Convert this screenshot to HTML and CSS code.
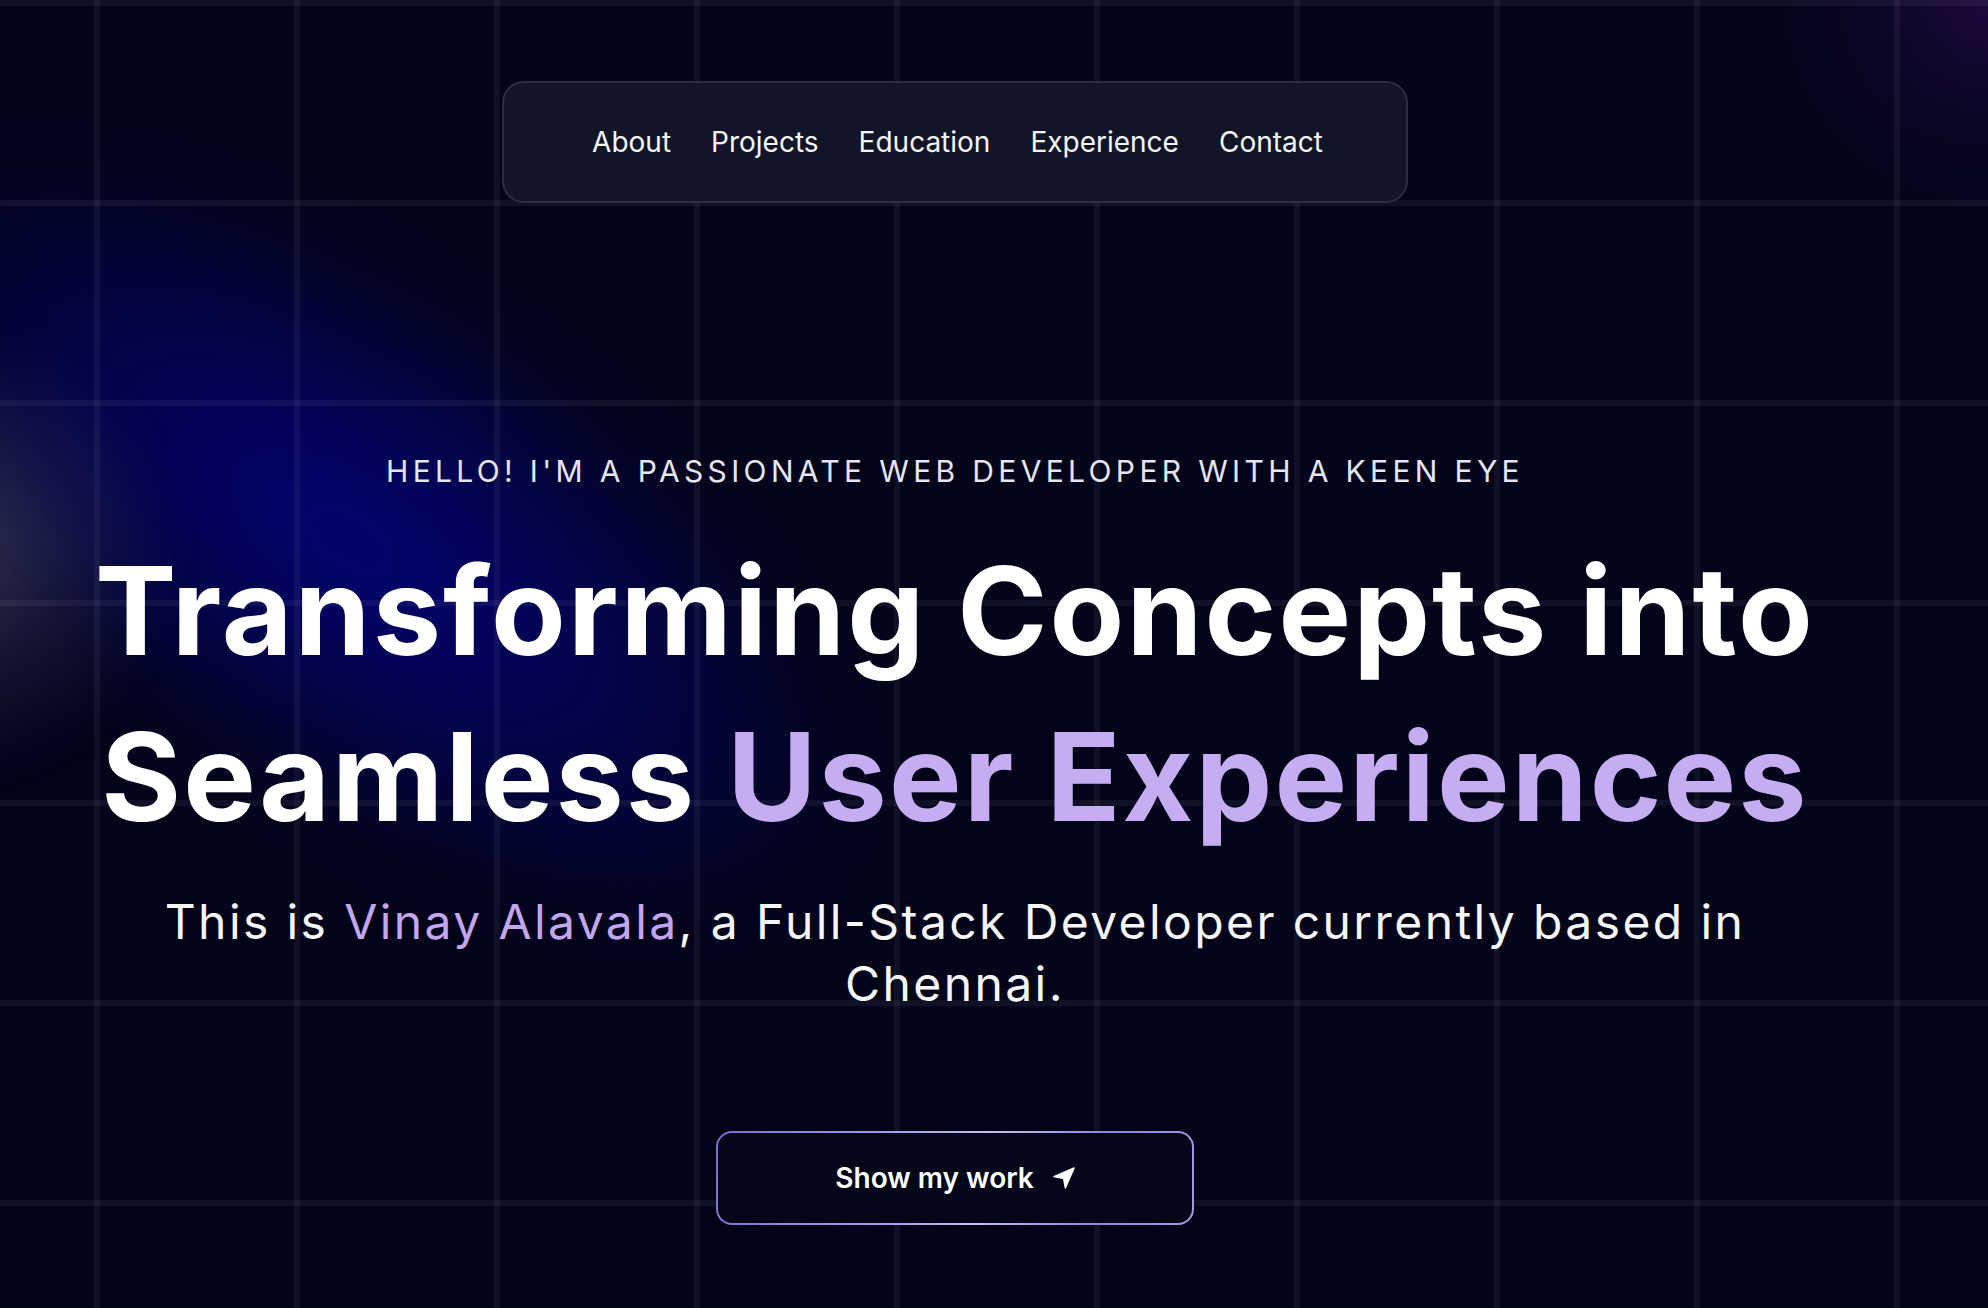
FILE: index.html
```html
<!DOCTYPE html>
<html lang="en">
<head>
<meta charset="utf-8">
<title>Vinay Alavala</title>
<link rel="stylesheet" href="styles.css">
</head>
<body>
<div class="hero">
  <div class="glow glow-blue"></div>
  <div class="glow glow-spot"></div>
  <div class="glow glow-purple"></div>
  <div class="grid"></div>
  <main class="content">
    <nav class="nav">
      <a href="#about">About</a>
      <a href="#projects">Projects</a>
      <a href="#education">Education</a>
      <a href="#experience">Experience</a>
      <a href="#contact">Contact</a>
    </nav>
    <p class="eyebrow">HELLO! I'M A PASSIONATE WEB DEVELOPER WITH A KEEN EYE</p>
    <h1 class="title">Transforming Concepts into<br>Seamless <span class="accent">User Experiences</span></h1>
    <p class="intro">This is <span class="accent-soft">Vinay Alavala</span>, a Full-Stack Developer currently based in Chennai.</p>
    <a class="cta" href="#projects">
      <span>Show my work</span>
      <svg class="cta-icon" viewBox="0 0 24 24" aria-hidden="true"><path d="M1 10.5 L23 1 L13.5 23 L11.5 12.5 Z" fill="#fff" stroke="#fff" stroke-width="1.5" stroke-linejoin="round"/></svg>
    </a>
  </main>
</div>
</body>
</html>
```
FILE: styles.css
```css
* { box-sizing: border-box; }
html, body { margin: 0; padding: 0; }
body {
  background: #03041a;
  font-family: Inter, "Noto Sans", "Liberation Sans", sans-serif;
  color: #fff;
  overflow: hidden;
}
.hero {
  position: relative;
  min-height: 1308px;
  overflow: hidden;
}
.glow {
  position: absolute;
  pointer-events: none;
}
.glow-blue {
  left: -225px;
  top: 280px;
  width: 1150px;
  height: 520px;
  transform: rotate(33deg);
  background: radial-gradient(ellipse at center, rgba(3, 3, 125, 0.9) 0%, rgba(3, 3, 100, 0.6) 40%, rgba(2, 3, 60, 0) 72%);
  filter: blur(30px);
}
.glow-spot {
  left: -270px;
  top: 330px;
  width: 440px;
  height: 440px;
  background: radial-gradient(circle at center, rgba(80, 80, 115, 0.6) 0%, rgba(45, 45, 90, 0.3) 45%, rgba(20, 20, 60, 0) 72%);
  filter: blur(20px);
}
.glow-purple {
  right: -220px;
  top: -220px;
  width: 440px;
  height: 440px;
  background: radial-gradient(circle at center, rgba(60, 15, 100, 0.45) 0%, rgba(40, 10, 80, 0.18) 40%, rgba(20, 5, 50, 0) 70%);
}
.grid {
  position: absolute;
  inset: 0;
  pointer-events: none;
  background-image:
    linear-gradient(to right, rgba(255, 255, 255, 0.05) 0, rgba(255, 255, 255, 0.05) 6px, transparent 6px),
    linear-gradient(to bottom, rgba(255, 255, 255, 0.05) 0, rgba(255, 255, 255, 0.05) 6px, transparent 6px);
  background-size: 200px 200px;
  background-position: 94px 0, 0 0;
}
.content {
  position: relative;
  z-index: 1;
  width: 1910px;
  display: flex;
  flex-direction: column;
  align-items: center;
  text-align: center;
  padding-top: 81px;
}
.nav {
  display: flex;
  align-items: center;
  gap: 40px;
  height: 122px;
  padding: 0 83px 0 88px;
  background: #111527;
  border: 2px solid #2a2e40;
  border-radius: 22px;
}
.nav a {
  color: #f4f5f8;
  text-decoration: none;
  font-size: 28px;
  font-weight: 400;
}
.eyebrow {
  margin: 248px 0 0;
  font-size: 30px;
  line-height: 40px;
  letter-spacing: 0.145em;
  color: #e4e6f4;
  font-weight: 400;
}
.title {
  margin: 37px 0 0;
  font-size: 122px;
  line-height: 166px;
  font-weight: 700;
  letter-spacing: 0.017em;
  color: #ffffff;
}
.accent { color: #c6adf2; }
.intro {
  margin: 31px 0 0;
  max-width: 1620px;
  font-size: 48px;
  line-height: 62px;
  letter-spacing: 0.05em;
  color: #f6f6f8;
  font-weight: 400;
}
.accent-soft { color: #c3a6f0; }
.cta {
  margin-top: 116px;
  width: 478px;
  height: 94px;
  display: flex;
  align-items: center;
  justify-content: center;
  gap: 19px;
  text-decoration: none;
  color: #fff;
  font-size: 28px;
  font-weight: 600;
  border-radius: 16px;
  border: 2px solid transparent;
  background:
    linear-gradient(#040619, #040619) padding-box,
    linear-gradient(100deg, #7a70d2 0%, #b3a7ec 45%, #c9bdf3 55%, #8b84dc 80%, #a49be6 100%) border-box;
}
.cta-icon {
  width: 22px;
  height: 22px;
  display: block;
}
```
